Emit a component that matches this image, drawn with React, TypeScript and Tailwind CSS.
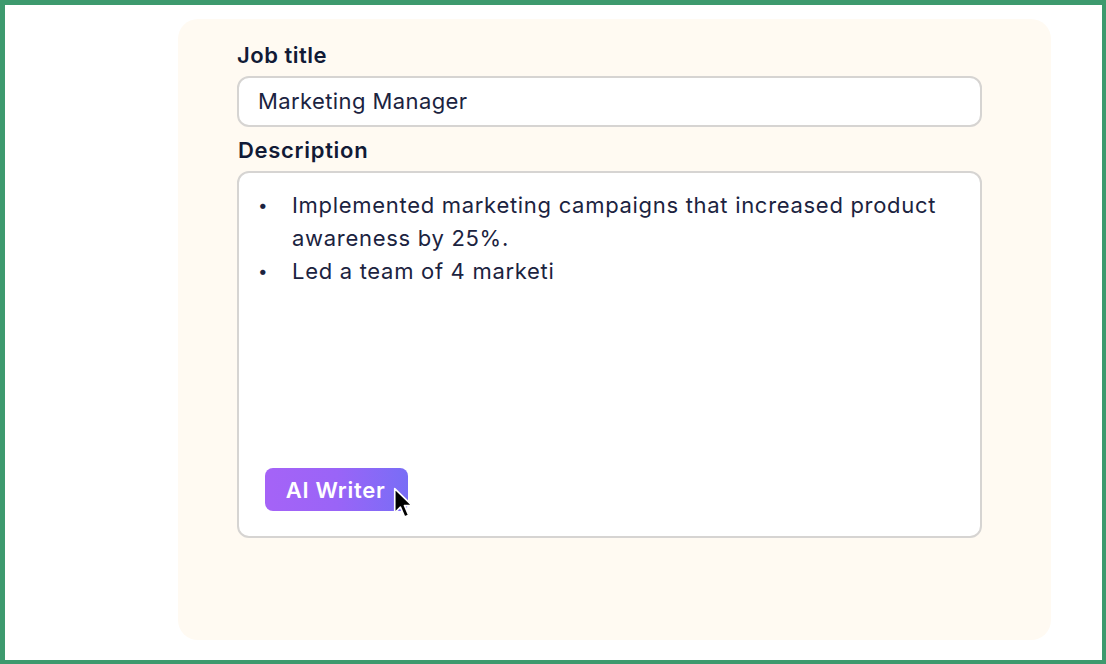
import React from "react";

function Cursor() {
  return (
    <svg width="21" height="33" viewBox="0 0 20 32" className="absolute left-[128px] top-[19px]">
      <path
        d="M1.5 1.5 L1.5 25 L7 19.5 L11 29 L15 27.3 L11 18 L18.5 18 Z"
        fill="#000"
        stroke="#fff"
        strokeWidth="1.6"
        strokeLinejoin="round"
      />
    </svg>
  );
}

export default function App() {
  return (
    <div
      className="w-[1106px] h-[664px] bg-white border-t-[5px] border-l-[5px] border-r-4 border-b-4 border-[#3d9a6e] pl-[173px] pr-[51px] pt-[14px] pb-[20px]"
      style={{ fontFamily: "Inter, 'Noto Sans', sans-serif" }}
    >
      {/* Card */}
      <div className="h-full rounded-[20px] bg-[#fffaf2] pl-[59px] pr-[69px] pt-[22px]">
        <label className="block text-[22px] leading-[28px] font-semibold text-[#111a36] tracking-[0.5px]">
          Job title
        </label>
        <div className="mt-[7px] h-[51px] rounded-[12px] border-2 border-[#d6d4d2] bg-white pl-[19px] flex items-center text-[22px] tracking-[0.4px] text-[#1b2340]">
          Marketing Manager
        </div>

        <label className="block mt-[9px] pl-[1px] text-[22px] leading-[28px] font-semibold text-[#111a36] tracking-[0.7px]">
          Description
        </label>
        <div className="mt-[7px] h-[367px] rounded-[12px] border-2 border-[#d6d4d2] bg-white pl-[18px] pr-[20px] pt-[16px] pb-[25px] flex flex-col text-[22px] leading-[33px] tracking-[0.7px] text-[#1b2340]">
          <div className="flex">
            <span className="w-[35px] shrink-0 pl-[1px] text-[17px]">•</span>
            <span>Implemented marketing campaigns that increased product awareness by 25%.</span>
          </div>
          <div className="flex">
            <span className="w-[35px] shrink-0 pl-[1px] text-[17px]">•</span>
            <span>Led a team of 4 marketi</span>
          </div>

          <div className="mt-auto pl-[8px]">
            <div className="relative inline-flex h-[43px] w-[143px] items-center justify-center rounded-[8px] bg-gradient-to-r from-[#a563f7] via-[#9a64f7] to-[#786df6] text-white text-[22px] tracking-[0.7px] font-semibold leading-none pr-[2px]">
              AI Writer
              <Cursor />
            </div>
          </div>
        </div>
      </div>
    </div>
  );
}
